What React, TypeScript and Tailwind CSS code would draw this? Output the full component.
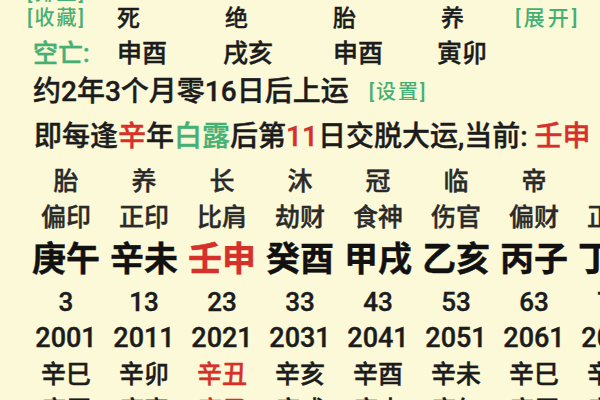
const GREEN = 'text-[#45b073]'
const RED = 'text-[#d6302a]'

const stages = ['胎', '养', '长', '沐', '冠', '临', '帝', '衰']
const gods = ['偏印', '正印', '比肩', '劫财', '食神', '伤官', '偏财', '正财']
const pillars = ['庚午', '辛未', '壬申', '癸酉', '甲戌', '乙亥', '丙子', '丁丑']
const ages = ['3', '13', '23', '33', '43', '53', '63', '73']
const years = ['2001', '2011', '2021', '2031', '2041', '2051', '2061', '2071']
const startYears = ['辛巳', '辛卯', '辛丑', '辛亥', '辛酉', '辛未', '辛巳', '辛卯']
const endYears = ['庚辰', '庚寅', '庚子', '庚戌', '庚申', '庚午', '庚辰', '庚寅']

// column of the running luck pillar
const CURRENT = 2

function GridRow({
  items,
  className,
  mark = false,
}: {
  items: string[]
  className: string
  mark?: boolean
}) {
  return (
    <div className={`flex pl-[27px] items-center ${className}`}>
      {items.map((t, i) => (
        <div
          key={i}
          className={`w-[78px] shrink-0 text-center whitespace-nowrap ${mark && i === CURRENT ? RED : ''}`}
        >
          {t}
        </div>
      ))}
    </div>
  )
}

export default function App() {
  return (
    <div
      className="w-[600px] h-[400px] overflow-hidden bg-[#fcf9d8] text-[#1c1c1c] font-medium [-webkit-text-stroke:0.4px_currentColor]"
      style={{ fontFamily: 'Roboto, "Noto Sans CJK SC", sans-serif' }}
    >
      <div className="w-[640px]">
        {/* row scrolled mostly out of view */}
        <div className={`-mt-[17px] h-[20px] flex items-center pl-[27px] text-[20px] leading-none tracking-[2px] [-webkit-text-stroke:0px] ${GREEN}`}>
          [排盘]
        </div>

        <div className="h-[30px] flex items-center pl-[27px] text-[23px] leading-none">
          <div className={`w-[90px] shrink-0 text-[20px] tracking-[2px] [-webkit-text-stroke:0px] ${GREEN}`}>[收藏]</div>
          <div className="w-[108px] shrink-0">死</div>
          <div className="w-[108px] shrink-0">绝</div>
          <div className="w-[108px] shrink-0">胎</div>
          <div className="w-[74px] shrink-0">养</div>
          <div className={`text-[21px] tracking-[3px] [-webkit-text-stroke:0px] ${GREEN}`}>[展开]</div>
        </div>

        <div className="h-[40px] flex items-center pl-[27px] text-[25px] leading-none">
          <div className={`w-[90px] shrink-0 pl-[6px] ${GREEN}`}>空亡:</div>
          <div className="w-[106px] shrink-0">申酉</div>
          <div className="w-[110px] shrink-0">戌亥</div>
          <div className="w-[104px] shrink-0">申酉</div>
          <div>寅卯</div>
        </div>

        <div className="h-[38px] flex items-center pl-[33px] text-[28px] leading-none whitespace-nowrap">
          <span>约2年3个月零16日后上运</span>
          <span className={`ml-[20px] text-[20px] tracking-[2px] [-webkit-text-stroke:0px] ${GREEN}`}>[设置]</span>
        </div>

        <div className="h-[52px] flex items-center pl-[34px] text-[28px] leading-none whitespace-nowrap">
          即每逢<span className={RED}>辛</span>年<span className={GREEN}>白露</span>后第
          <span className={RED}>11</span>日交脱大运,当前:&nbsp;<span className={RED}>壬申</span>
        </div>

        <GridRow items={stages} className="h-[36px] text-[25px] leading-none text-[#2a2a2a]" />
        <GridRow items={gods} className="h-[36px] text-[25px] leading-none text-[#2a2a2a]" />
        <GridRow items={pillars} mark className="h-[48px] text-[34px] leading-none font-bold text-[#111]" />
        <GridRow items={ages} className="h-[38px] text-[26px] leading-none" />
        <GridRow items={years} className="h-[34px] text-[27px] leading-none" />
        <GridRow items={startYears} mark className="h-[38px] text-[25px] leading-none" />
        <GridRow items={endYears} mark className="h-[34px] text-[25px] leading-none" />
      </div>
    </div>
  )
}
